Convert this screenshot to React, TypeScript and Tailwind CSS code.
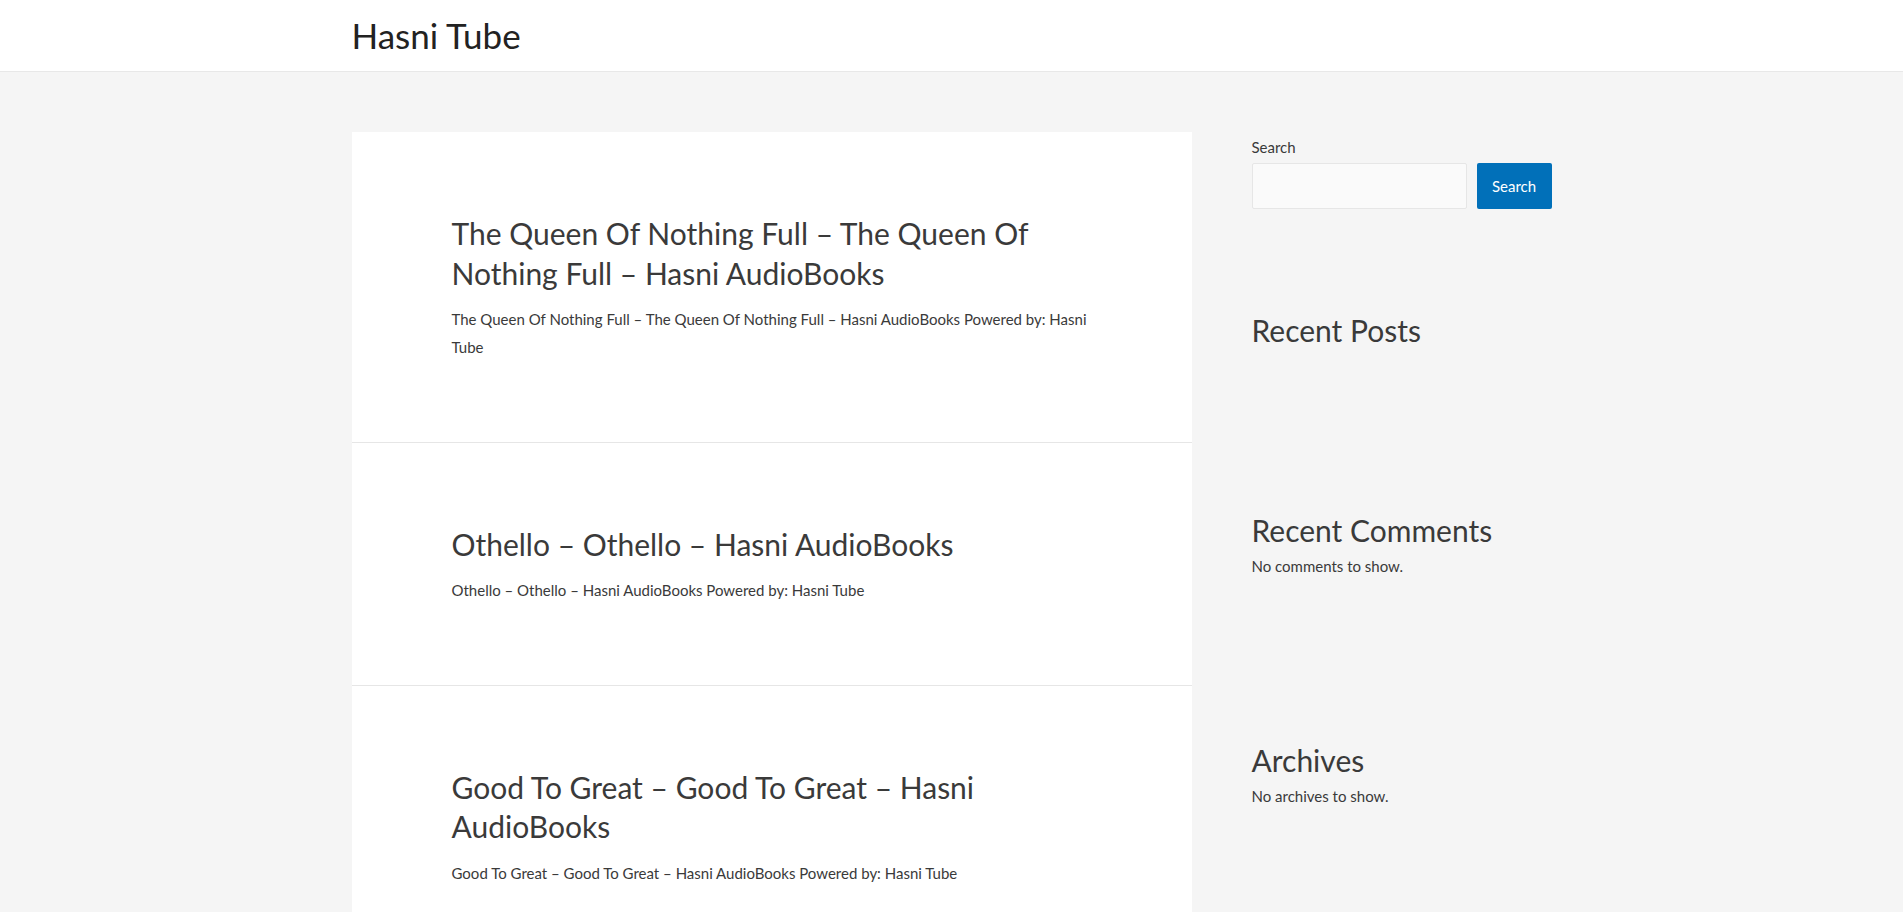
import React from "react";

const posts = [
  {
    id: 1,
    title: "The Queen Of Nothing Full – The Queen Of Nothing Full – Hasni AudioBooks",
    excerpt:
      "The Queen Of Nothing Full – The Queen Of Nothing Full – Hasni AudioBooks Powered by: Hasni Tube",
  },
  {
    id: 2,
    title: "Othello – Othello – Hasni AudioBooks",
    excerpt: "Othello – Othello – Hasni AudioBooks Powered by: Hasni Tube",
  },
  {
    id: 3,
    title: "Good To Great – Good To Great – Hasni AudioBooks",
    excerpt: "Good To Great – Good To Great – Hasni AudioBooks Powered by: Hasni Tube",
  },
];

const PostCard = ({ title, excerpt }: { title: string; excerpt: string }) => {
  return (
    <article className="bg-white px-[100px] pt-[82px] pb-[80px] border-b border-[#e6e6e6]">
      <h2 className="text-[30px] leading-[39.5px] text-[#3a3a3a] font-normal">
        <a href="#">{title}</a>
      </h2>
      <p className="mt-[13px] text-[15px] leading-[27.75px] text-[#3a3a3a]">
        {excerpt}
      </p>
    </article>
  );
};

const Widget = ({ title, text }: { title: string; text?: string }) => {
  return (
    <section>
      <h2 className="text-[30px] leading-[39px] text-[#3a3a3a] font-normal">
        {title}
      </h2>
      {text && (
        <p className="mt-[2px] text-[15px] leading-[28px] text-[#3a3a3a]">
          {text}
        </p>
      )}
    </section>
  );
};

const App = () => {
  return (
    <div className="min-h-screen bg-[#f5f5f5] font-['Lato',sans-serif] text-[#3a3a3a]">
      <header className="bg-white h-[72px] border-b border-[#e8e8e8]">
        <div className="w-[1200px] mx-auto h-full flex items-center">
          <a href="#" className="text-[35px] leading-none text-[#222222]">
            Hasni Tube
          </a>
        </div>
      </header>

      <div className="w-[1200px] mx-auto flex pt-[60px] pb-[60px]">
        <main className="w-[840px] shrink-0">
          {posts.map((post) => (
            <PostCard key={post.id} title={post.title} excerpt={post.excerpt} />
          ))}
        </main>

        <aside className="w-[360px] pl-[60px] flex flex-col">
          <form onSubmit={(e) => e.preventDefault()}>
            <label className="block pt-[1px] text-[15px] leading-[28px] text-[#3a3a3a]">Search</label>
            <div className="mt-[2px] flex gap-[10px]">
              <input
                type="text"
                className="w-[215px] h-[46px] bg-[#fafafa] border border-[#e6e6e6] rounded-[2px] px-3 text-[15px] outline-none"
              />
              <button
                type="submit"
                className="w-[75px] h-[46px] bg-[#0170b9] text-white text-[15px] rounded-[2px]"
              >
                Search
              </button>
            </div>
          </form>

          <div className="mt-[102px] flex flex-col gap-[161px]">
            <Widget title="Recent Posts" />
            <Widget title="Recent Comments" text="No comments to show." />
            <Widget title="Archives" text="No archives to show." />
          </div>
        </aside>
      </div>
    </div>
  );
};

export default App;
